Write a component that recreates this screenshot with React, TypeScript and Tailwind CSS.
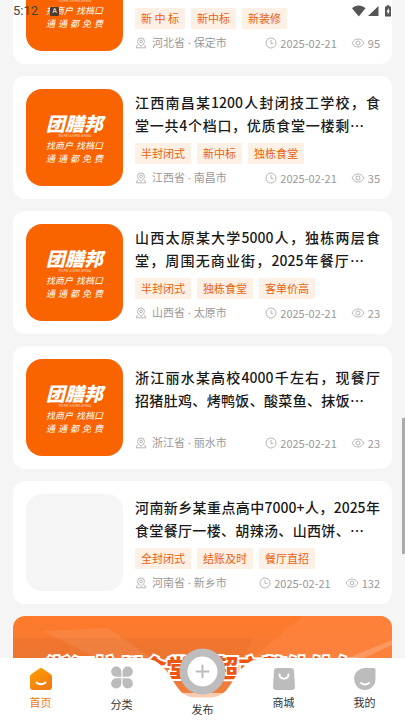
import type { ReactNode } from 'react'

type Post = {
  lines: [string, string]
  tags: string[]
  place: string
  date: string
  views: number
  cover: boolean
}

const POSTS: Post[] = [
  {
    lines: ['河北保定某大学8000人，食堂档口', '招商，现有餐厅二楼风味档口招…'],
    tags: ['新 中 标', '新中标', '新装修'],
    place: '河北省 · 保定市',
    date: '2025-02-21',
    views: 95,
    cover: true,
  },
  {
    lines: ['江西南昌某1200人封闭技工学校，食', '堂一共4个档口，优质食堂一楼剩…'],
    tags: ['半封闭式', '新中标', '独栋食堂'],
    place: '江西省 · 南昌市',
    date: '2025-02-21',
    views: 35,
    cover: true,
  },
  {
    lines: ['山西太原某大学5000人，独栋两层食', '堂，周围无商业街，2025年餐厅…'],
    tags: ['半封闭式', '独栋食堂', '客单价高'],
    place: '山西省 · 太原市',
    date: '2025-02-21',
    views: 23,
    cover: true,
  },
  {
    lines: ['浙江丽水某高校4000千左右，现餐厅', '招猪肚鸡、烤鸭饭、酸菜鱼、抹饭…'],
    tags: [],
    place: '浙江省 · 丽水市',
    date: '2025-02-21',
    views: 23,
    cover: true,
  },
  {
    lines: ['河南新乡某重点高中7000+人，2025年', '食堂餐厅一楼、胡辣汤、山西饼、…'],
    tags: ['全封闭式', '结账及时', '餐厅直招'],
    place: '河南省 · 新乡市',
    date: '2025-02-21',
    views: 132,
    cover: false,
  },
]

function PinIcon() {
  return (
    <svg viewBox="0 0 12 12" className="size-3" fill="none" stroke="#a3a3a3" strokeWidth="0.8">
      <path d="M6 9.3C3.8 7.6 2.6 6.2 2.6 4.3a3.4 3.4 0 0 1 6.8 0C9.4 6.2 8.2 7.6 6 9.3Z" />
      <circle cx="6" cy="4.4" r="1.4" />
      <path d="M2.6 7.8 1.2 10.8h9.6L9.4 7.8" />
    </svg>
  )
}

function ClockIcon() {
  return (
    <svg viewBox="0 0 12 12" className="size-3" fill="none" stroke="#a3a3a3" strokeWidth="0.8">
      <circle cx="6" cy="6" r="5" />
      <path d="M6 3v3.4h2.4" />
    </svg>
  )
}

function EyeIcon() {
  return (
    <svg viewBox="0 0 14 12" className="h-3 w-3.5" fill="none" stroke="#a3a3a3" strokeWidth="0.8">
      <path d="M1 6c1.5-2.6 3.500-4 6-4s4.500 1.400 6 4c-1.500 2.600-3.500 4-6 4S2.500 8.600 1 6Z" />
      <circle cx="7" cy="6" r="2" />
    </svg>
  )
}

function Cover() {
  return (
    <div className="flex size-[97px] shrink-0 flex-col items-center rounded-2xl bg-[#f96400] pt-6 text-white italic">
      <span className="text-[19px] leading-5 font-black">团膳邦</span>
      <span className="text-[4px] leading-1 text-[#ffd9bd]">TUAN SHAN BANG</span>
      <span className="mt-[2px] flex w-[57px] justify-between text-[9px] leading-[13px]">
        <span>找商户</span>
        <span>找档口</span>
      </span>
      <span className="flex w-[57px] justify-between text-[9px] leading-[13px]">
        {['通', '通', '都', '免', '费'].map((c, i) => (
          <span key={i}>{c}</span>
        ))}
      </span>
    </div>
  )
}

function PostCard({ post }: { post: Post }) {
  return (
    <article className="flex gap-3 rounded-xl bg-white p-[13px] pr-3">
      {post.cover ? <Cover /> : <div className="size-[97px] shrink-0 rounded-2xl bg-[#f5f5f5]" />}
      <div className="flex min-w-0 flex-1 flex-col justify-center gap-[6px] pt-[2px]">
        <h2 className="text-sm leading-[23px] font-medium text-[#1a1a1a]">
          <span className="block whitespace-nowrap [text-align-last:justify]">{post.lines[0]}</span>
          <span className="mr-4 block whitespace-nowrap [text-align-last:justify]">{post.lines[1]}</span>
        </h2>
        <div className="flex min-h-[11px] gap-[6px]">
          {post.tags.map((tag) => (
            <span key={tag} className="bg-[#fff0e6] px-[6px] text-[11px] leading-[21px] text-[#e8620c]">
              {tag}
            </span>
          ))}
        </div>
        <div className="flex items-center text-[11px] leading-4 text-[#999]">
          <PinIcon />
          <span className="ml-[5px] font-['Noto_Sans','Noto_Sans_CJK_SC',sans-serif]">{post.place}</span>
          <span className="ml-auto"><ClockIcon /></span>
          <time className="ml-[3px]">{post.date}</time>
          <span className="ml-[14px]"><EyeIcon /></span>
          <span className="ml-[3px]">{post.views}</span>
        </div>
      </div>
    </article>
  )
}

function Banner() {
  return (
    <a href="#banner" className="relative block h-[120px] overflow-hidden rounded-xl bg-linear-to-b from-[#ff7a2a] via-[#ed7a38] to-[#ff8a45]">
      <svg viewBox="0 0 379 120" preserveAspectRatio="none" className="absolute inset-0 size-full">
        <path d="M0 22h240l-20 38H0Z" fill="#c85a1c" opacity="0.14" />
        <path d="M30 15 95 12 165 60H120Z" fill="#fff" opacity="0.08" />
        <path d="M240 42 290 0h89v60H215Z" fill="#ff8440" opacity="0.7" />
        <path d="M320 48 379 24v5L330 52Z" fill="#fff" opacity="0.18" />
      </svg>
      <span className="relative block pt-[34px] text-center text-2xl leading-[34px] font-black whitespace-nowrap text-[#f0560f] [-webkit-text-stroke:4px_white] [paint-order:stroke_fill]">
        浙江杭州食堂、超市整体外包
      </span>
    </a>
  )
}

function StatusBar() {
  return (
    <div className="absolute inset-x-0 top-0 flex h-[22px] items-center px-[13px] text-[#444]">
      <span className="font-[Roboto] text-[13px] leading-[22px]">5:12</span>
      <span className="ml-3 flex size-[9px] items-center justify-center rounded-[1px] bg-[#4b3a30] font-[Roboto] text-[7px] font-bold text-[#d8c8bc]">A</span>
      <svg viewBox="0 0 40 12" className="ml-auto h-3 w-10" fill="#555">
        <path d="M0 3.200C4-.3 9.500-.3 13.500 3.200L6.800 11.500Z" />
        <path d="M26.500 1v10H16Z" />
        <path d="M33 1.500h1.700V.3h2.600v1.200H39V11.500h-6Z" />
        <path d="m36.800 2.800-2.300 4h1.200v3l2.200-4h-1.200Z" fill="#fff" />
      </svg>
    </div>
  )
}

function NavItem({ label, active, className, children }: { label: string; active?: boolean; className: string; children: ReactNode }) {
  return (
    <button type="button" className={`flex flex-1 flex-col items-center text-[11px] leading-4 ${active ? 'text-[#f07818]' : 'text-[#333]'} ${className}`}>
      {children}
      {label}
    </button>
  )
}

function TabBar() {
  return (
    <nav className="absolute inset-x-0 bottom-0 h-[62px]">
      {/* bar with the dip under the publish button */}
      <div className="absolute inset-0 flex">
        <div className="flex-1 bg-white" />
        <svg viewBox="0 0 120 62" className="h-[62px] w-[120px]">
          <path d="M36 35h48l-6 8H42Z" fill="#fff" opacity="0.6" />
          <path d="M0 0C12 1 18 6 25 15C33 26 37 39 52 39.500H68C83 39 87 26 95 15C102 6 108 1 120 0V62H0Z" fill="#fff" />
        </svg>
        <div className="flex-1 bg-white" />
      </div>
      <div className="relative flex h-full items-start">
        <NavItem label="首页" active className="gap-[3px] pt-[9px]">
          <svg viewBox="0 0 22 24" className="h-6 w-[22px]">
            <defs>
              <linearGradient id="home" x1="0" y1="0" x2="0.600" y2="1">
                <stop offset="0" stopColor="#ffa000" />
                <stop offset="1" stopColor="#f27a12" />
              </linearGradient>
            </defs>
            <path d="M9.500 1.600a2.500 2.500 0 0 1 3 0L20.500 7A3 3 0 0 1 22 9.500V20a3 3 0 0 1-3 3H3a3 3 0 0 1-3-3V9.500A3 3 0 0 1 1.500 7Z" fill="url(#home)" />
            <path d="M6.500 15.500c2.500 2.300 6.500 2.300 9 0" fill="none" stroke="#fff" strokeWidth="2" strokeLinecap="round" />
          </svg>
        </NavItem>
        <NavItem label="分类" className="gap-[7px] pt-2">
          <svg viewBox="0 0 22 23" className="h-[23px] w-[22px]" fill="#bcbcbc">
            <path d="M5.200.5a5 5 0 0 1 5.200 5.200v5H5.200a5.100 5.100 0 0 1 0-10.200Z" />
            <path d="M16.800.5a5 5 0 0 0-5.200 5.200v5h5.200a5.100 5.100 0 0 0 0-10.200Z" />
            <path d="M5.200 22.500a5 5 0 0 0 5.200-5.200v-5H5.200a5.100 5.100 0 0 0 0 10.200Z" />
            <path d="M16.800 22.500a5 5 0 0 1-5.200-5.200v-5h5.200a5.100 5.100 0 0 1 0 10.200Z" />
          </svg>
        </NavItem>
        <NavItem label="发布" className="-mt-[10px] gap-[6px]">
          <svg viewBox="0 0 47 47" className="size-[47px]">
            <circle cx="23.500" cy="23.500" r="19" fill="#fff" stroke="#bdbdbd" strokeWidth="8" />
            <path d="M23.500 17.500v12M17.500 23.500h12" stroke="#bdbdbd" strokeWidth="2" strokeLinecap="round" />
          </svg>
        </NavItem>
        <NavItem label="商城" className="gap-[3px] pt-[9px]">
          <svg viewBox="0 0 22 24" className="h-6 w-[22px]">
            <path d="M4 1h14a3 3 0 0 1 3 2.800L22 20a3 3 0 0 1-3 3H3a3 3 0 0 1-3-3L1 3.800A3 3 0 0 1 4 1Z" fill="#bcbcbc" />
            <path d="M6.500 7.500c.5 5.500 8.500 5.500 9 0" fill="none" stroke="#fff" strokeWidth="2" strokeLinecap="round" />
          </svg>
        </NavItem>
        <NavItem label="我的" className="gap-[3px] pt-[9px]">
          <svg viewBox="0 0 22 24" className="h-6 w-[22px]">
            <path d="M11 1h9a1.500 1.500 0 0 1 1.500 1.500V12A10.700 11 0 1 1 11 1Z" fill="#bcbcbc" />
            <path d="M7 16c2.300 1.800 5.700 1.800 8 0" fill="none" stroke="#fff" strokeWidth="2" strokeLinecap="round" />
          </svg>
        </NavItem>
      </div>
    </nav>
  )
}

export default function App() {
  return (
    <div className="relative h-screen overflow-hidden bg-[#f5f5f5] font-['Noto_Sans_CJK_SC',sans-serif]">
      <main className="-mt-[59px] flex flex-col gap-3 px-[13px]">
        {POSTS.map((post) => (
          <PostCard key={post.place} post={post} />
        ))}
        <Banner />
      </main>
      <div className="absolute top-[418px] right-0 h-[136px] w-[3px] bg-[#aaa]" />
      <StatusBar />
      <TabBar />
    </div>
  )
}
